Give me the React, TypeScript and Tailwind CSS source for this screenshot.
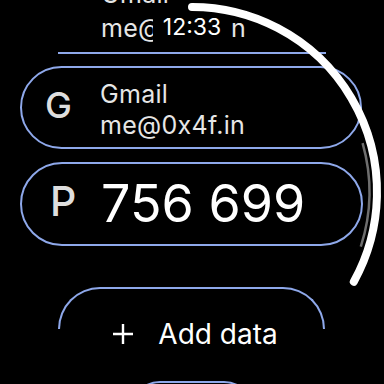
import React from 'react';

const chipBorder = 'border-[#8ea8ea]';

const ScrollIndicator: React.FC = () => (
  <svg
    className="absolute inset-0 pointer-events-none"
    width={384}
    height={384}
    viewBox="0 0 384 384"
  >
    {/* track segment */}
    <path
      d="M362.6 143.2 A178.5 178.5 0 0 1 360.8 246.7"
      fill="none"
      stroke="#6e6e6e"
      strokeWidth={2.5}
    />
    {/* thumb */}
    <path
      d="M192 7 A185 185 0 0 1 353.8 281.7"
      fill="none"
      stroke="#ffffff"
      strokeWidth={8}
      strokeLinecap="round"
    />
  </svg>
);

export default function App() {
  return (
    <div
      className="relative w-[384px] h-[384px] bg-black overflow-hidden text-[#e6e6e6]"
      style={{ fontFamily: 'Inter, "Noto Sans", sans-serif' }}
    >
      <div className="flex flex-col">
        {/* partially scrolled-off item */}
        <div className={`mt-[-30px] ml-[58px] w-[268px] h-[84px] border-b-2 ${chipBorder} flex items-center pl-[43px]`}>
          <div className="text-[25px] tracking-[0.3px]">
            <div className="leading-[29px] mb-[4px]">Gmail</div>
            <div className="leading-[31px] mb-[-2px]">me@0x4f.in</div>
          </div>
        </div>

        {/* Gmail */}
        <div className={`mt-[12px] ml-[20px] w-[342px] h-[83px] rounded-[42px] border-2 ${chipBorder} flex items-center pl-[23px] pt-[4px]`}>
          <span className="w-[55px] mb-[9px] text-[36px] leading-none font-medium text-[#dedede]">G</span>
          <div className="text-[25px] leading-[31px] tracking-[0.3px]">
            <div>Gmail</div>
            <div>me@0x4f.in</div>
          </div>
        </div>

        {/* code */}
        <div className={`mt-[13px] ml-[20px] w-[343px] h-[84px] rounded-[42px] border-2 ${chipBorder} flex items-center pl-[28px]`}>
          <span className="w-[51px] mb-[5px] text-[41px] leading-none font-medium text-[#dedede]">P</span>
          <span className="text-[52px] leading-none text-white">756 699</span>
        </div>

        {/* add data */}
        <div className="relative mt-[41px] ml-[58px] w-[267px] h-[84px] flex items-center justify-center pt-[10px] pl-[8px] text-white">
          <div className={`absolute inset-x-0 top-0 h-[42px] rounded-t-[42px] border-2 border-b-0 ${chipBorder}`} />
          <svg width={20} height={20} viewBox="0 0 20 20" className="mr-[25px]">
            <path d="M10 0 V20 M0 10 H20" stroke="#ffffff" strokeWidth={2.4} />
          </svg>
          <span className="text-[28px] leading-none">Add data</span>
        </div>

        <div className={`mt-[10px] ml-[130px] w-[124px] h-[60px] rounded-[30px] border-2 ${chipBorder}`} />
      </div>

      {/* time */}
      <div className="absolute top-[10px] left-[153px] w-[78px] h-[34px] bg-black flex justify-center text-[23px] leading-[34px] text-white">
        12:33
      </div>

      <ScrollIndicator />
    </div>
  );
}
